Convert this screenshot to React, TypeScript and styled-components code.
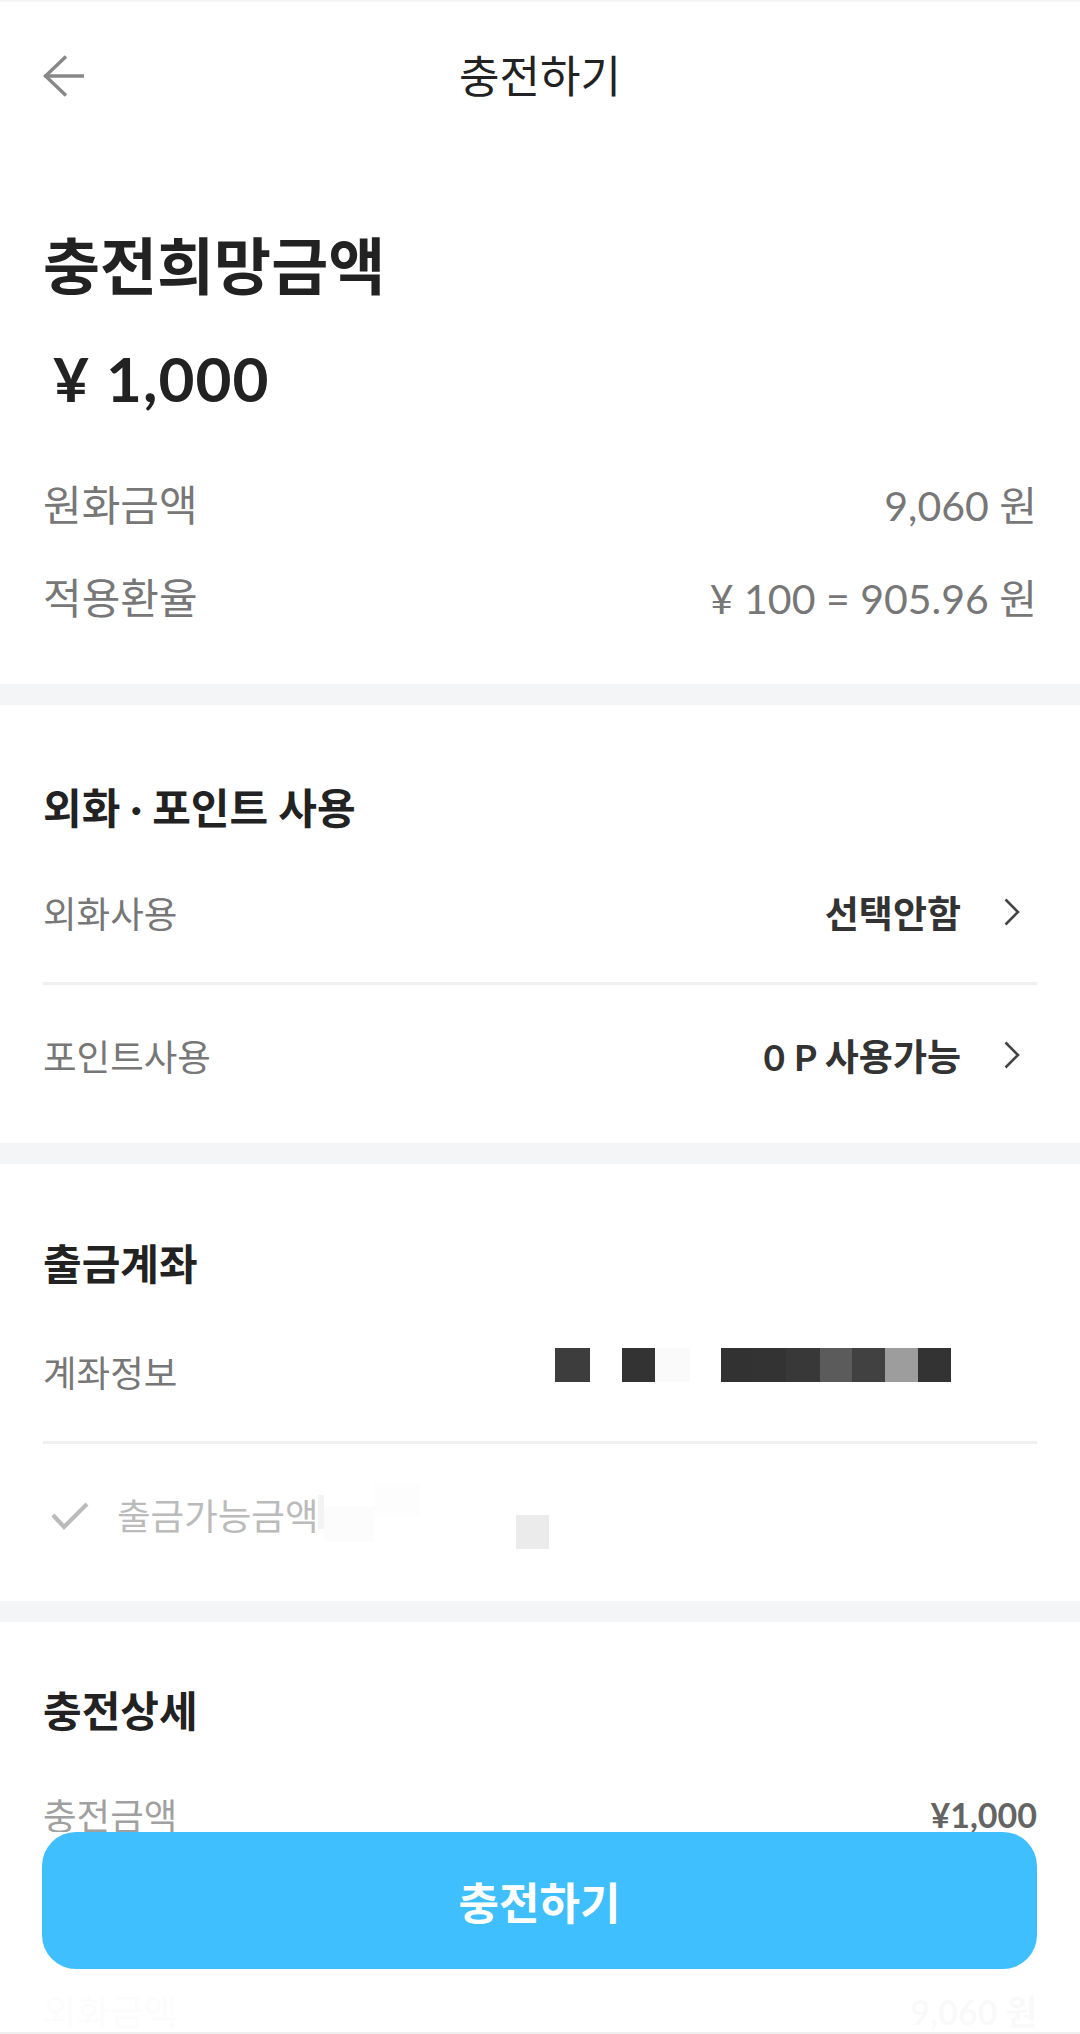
import React from 'react';
import styled, { createGlobalStyle } from 'styled-components';

const GlobalStyle = createGlobalStyle`
  * { box-sizing: border-box; }
  html, body {
    margin: 0;
    padding: 0;
    background: #fff;
    overflow: hidden;
  }
  body {
    font-family: Lato, "Noto Sans CJK KR", sans-serif;
    color: #222;
    -webkit-font-smoothing: antialiased;
  }
`;

const Page = styled.div`
  width: 1080px;
  min-height: 2034px;
  background: #fff;
`;

const Header = styled.header`
  height: 150px;
  border-top: 2px solid #f4f4f4;
  padding: 0 43px;
  display: grid;
  grid-template-columns: 1fr auto 1fr;
  align-items: center;
`;

const BackButton = styled.button`
  width: 42px;
  height: 42px;
  padding: 0;
  border: 0;
  background: none;
  display: flex;
  align-items: center;
  justify-self: start;
`;

const HeaderTitle = styled.h1`
  margin: 0;
  font-size: 44px;
  font-weight: 400;
  line-height: 1;
  color: #222;
`;

const Summary = styled.section`
  padding: 76px 43px 42px;
`;

const BigTitle = styled.h2`
  margin: 0;
  font-size: 62px;
  font-weight: 700;
  line-height: 80px;
  color: #222;
`;

const Amount = styled.div`
  margin: 32px 0 38px;
  padding-left: 10px;
  font-size: 62px;
  font-weight: 700;
  letter-spacing: 1px;
  line-height: 80px;
  color: #222;
`;

const InfoRow = styled.div`
  height: 93px;
  display: flex;
  align-items: center;
  justify-content: space-between;
  font-size: 42px;
  color: #777;
`;

const InfoValue = styled.span`
  font-size: 41px;
`;

const Band = styled.div`
  height: 21px;
  background: #f4f5f7;
`;

const Section = styled.section<{ $pt: number; $pb: number }>`
  padding: ${p => p.$pt}px 43px ${p => p.$pb}px;
`;

const SectionTitle = styled.h3<{ $mb: number }>`
  margin: 0 0 ${p => p.$mb}px;
  font-size: 42px;
  font-weight: 700;
  line-height: 60px;
  color: #222;
`;

const ListRow = styled.div<{ $h?: number }>`
  height: ${p => p.$h ?? 140}px;
  display: flex;
  align-items: center;
`;

const RowLabel = styled.span<{ $muted?: boolean }>`
  font-size: 36.5px;
  color: ${p => (p.$muted ? '#bbb' : '#777')};
`;

const RowValue = styled.span`
  margin-left: auto;
  font-size: 37px;
  font-weight: 700;
  color: #333;
`;

const DetailValue = styled.span`
  margin-left: auto;
  font-size: 34px;
  font-weight: 700;
  color: #222;
`;

const ChevronBox = styled.span`
  display: flex;
  margin: 0 17px 0 43px;
`;

const Divider = styled.div`
  height: 3px;
  background: #f0f0f0;
`;

const CheckBox = styled.span`
  display: flex;
  margin: 4px 28px 0 8px;
`;

const Redacted = styled.div<{ $mr?: number }>`
  display: flex;
  margin-left: ${p => (p.$mr !== undefined ? 'auto' : '0')};
  margin-right: ${p => p.$mr ?? 0}px;
`;

const Pixel = styled.span<{ $w: number; $c: string; $dy?: number }>`
  width: ${p => p.$w}px;
  height: 34px;
  background: ${p => p.$c};
  transform: translateY(${p => p.$dy ?? 0}px);
`;

const Footer = styled.div`
  position: fixed;
  left: 0;
  right: 0;
  bottom: 0;
  padding: 56px 43px 63px 42px;
  border-bottom: 2px solid #efefef;
  background: linear-gradient(
    to bottom,
    rgba(255, 255, 255, 0.3) 0,
    rgba(255, 255, 255, 0.3) 56px,
    rgba(255, 255, 255, 0.975) 56px
  );
`;

const ChargeButton = styled.button`
  width: 100%;
  height: 137px;
  border: 0;
  border-radius: 34px;
  background: #40bfff;
  color: #fff;
  font-family: Lato, "Noto Sans CJK KR", sans-serif;
  font-size: 44px;
  font-weight: 700;
`;

const BackArrow = () => (
  <svg width="42" height="42" viewBox="0 0 42 42" fill="none" stroke="#888" strokeWidth="3.4">
    <path d="M1.5 21 H41" />
    <path d="M23 1.5 L2.5 21 L23 40.5" />
  </svg>
);

const Chevron = () => (
  <svg width="16" height="28" viewBox="0 0 16 28" fill="none" stroke="#444" strokeWidth="2.6">
    <path d="M1.5 1.5 L14 14 L1.5 26.5" />
  </svg>
);

const Check = () => (
  <svg width="38" height="30" viewBox="0 0 38 30" fill="none" stroke="#bbb" strokeWidth="4.2">
    <path d="M2 14 L13 26 L36 3" />
  </svg>
);

const accountPixels = [
  { w: 35, c: '#3d3d3d' },
  { w: 32, c: '#fff' },
  { w: 33, c: '#333' },
  { w: 35, c: '#fafafa' },
  { w: 31, c: '#fff' },
  { w: 32, c: '#323232' },
  { w: 33, c: '#333' },
  { w: 34, c: '#383838' },
  { w: 32, c: '#5b5b5b' },
  { w: 33, c: '#414141' },
  { w: 33, c: '#9d9d9d' },
  { w: 33, c: '#333' },
];

const balancePixels = [
  { w: 6, c: '#f3f3f3', dy: -2 },
  { w: 50, c: '#fcfcfc', dy: 10 },
  { w: 46, c: '#fdfdfd', dy: -14 },
  { w: 96, c: '#fff', dy: 0 },
  { w: 33, c: '#ebebeb', dy: 18 },
];

export default function App() {
  return (
    <Page>
      <GlobalStyle />
      <Header>
        <BackButton aria-label="뒤로">
          <BackArrow />
        </BackButton>
        <HeaderTitle>충전하기</HeaderTitle>
        <span />
      </Header>

      <Summary>
        <BigTitle>충전희망금액</BigTitle>
        <Amount>¥ 1,000</Amount>
        <InfoRow>
          <span>원화금액</span>
          <InfoValue>9,060 원</InfoValue>
        </InfoRow>
        <InfoRow>
          <span>적용환율</span>
          <InfoValue>¥ 100 = 905.96 원</InfoValue>
        </InfoRow>
      </Summary>

      <Band />

      <Section $pt={73} $pb={18}>
        <SectionTitle $mb={4}>외화 · 포인트 사용</SectionTitle>
        <ListRow>
          <RowLabel>외화사용</RowLabel>
          <RowValue>선택안함</RowValue>
          <ChevronBox><Chevron /></ChevronBox>
        </ListRow>
        <Divider />
        <ListRow>
          <RowLabel>포인트사용</RowLabel>
          <RowValue>0 P 사용가능</RowValue>
          <ChevronBox><Chevron /></ChevronBox>
        </ListRow>
      </Section>

      <Band />

      <Section $pt={70} $pb={17}>
        <SectionTitle $mb={7}>출금계좌</SectionTitle>
        <ListRow>
          <RowLabel>계좌정보</RowLabel>
          <Redacted $mr={86} style={{ transform: 'translateY(-6px)' }}>
            {accountPixels.map((p, i) => (
              <Pixel key={i} $w={p.w} $c={p.c} />
            ))}
          </Redacted>
        </ListRow>
        <Divider />
        <ListRow>
          <CheckBox><Check /></CheckBox>
          <RowLabel $muted>출금가능금액</RowLabel>
          <Redacted>
            {balancePixels.map((p, i) => (
              <Pixel key={i} $w={p.w} $c={p.c} $dy={p.dy} />
            ))}
          </Redacted>
        </ListRow>
      </Section>

      <Band />

      <Section $pt={59} $pb={40}>
        <SectionTitle $mb={24}>충전상세</SectionTitle>
        <ListRow $h={98}>
          <RowLabel>충전금액</RowLabel>
          <DetailValue>¥1,000</DetailValue>
        </ListRow>
        <ListRow $h={98}>
          <RowLabel>포인트사용</RowLabel>
          <DetailValue>0 P</DetailValue>
        </ListRow>
        <ListRow $h={98}>
          <RowLabel>외화금액</RowLabel>
          <DetailValue>9,060 원</DetailValue>
        </ListRow>
      </Section>

      <Footer>
        <ChargeButton>충전하기</ChargeButton>
      </Footer>
    </Page>
  );
}
